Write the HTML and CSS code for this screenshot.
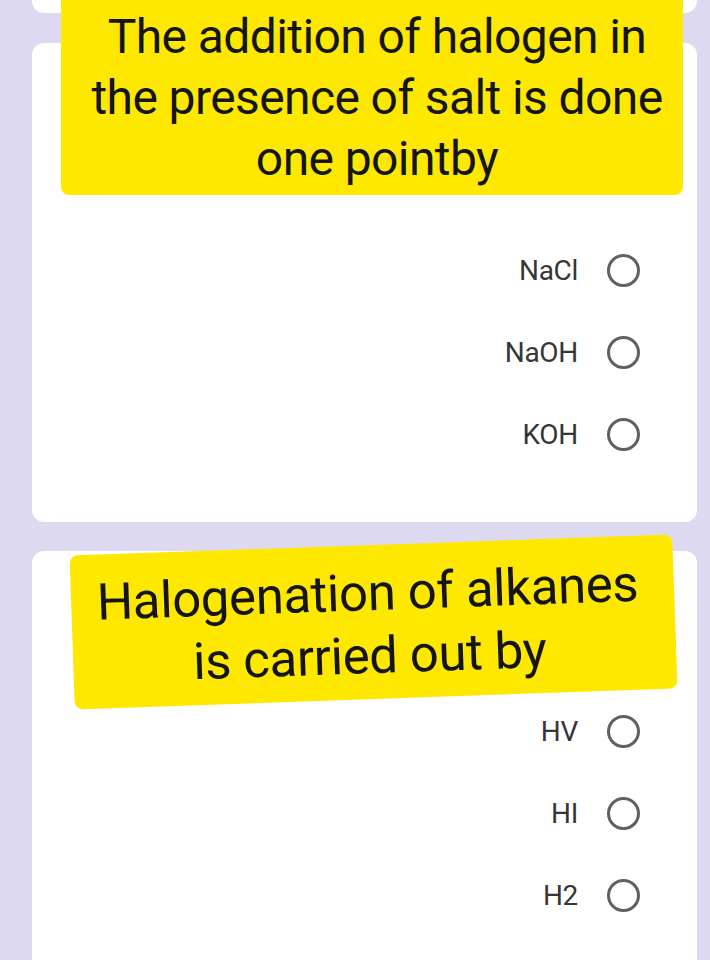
FILE: index.html
```html
<!DOCTYPE html>
<html>
<head>
<meta charset="utf-8">
<link rel="stylesheet" href="styles.css">
</head>
<body>
<div class="page">
  <div class="card card-prev"></div>

  <div class="card card-q1">
    <div class="sticker sticker-1">
      <p>The addition of halogen in<br>the presence of salt is done<br>one pointby</p>
    </div>
    <ul class="options options-1">
      <li class="option"><span class="label">NaCl</span><span class="radio"></span></li>
      <li class="option"><span class="label">NaOH</span><span class="radio"></span></li>
      <li class="option"><span class="label">KOH</span><span class="radio"></span></li>
    </ul>
  </div>

  <div class="card card-q2">
    <div class="sticker sticker-2">
      <p>Halogenation of alkanes<br>is carried out by</p>
    </div>
    <ul class="options options-2">
      <li class="option"><span class="label">HV</span><span class="radio"></span></li>
      <li class="option"><span class="label">HI</span><span class="radio"></span></li>
      <li class="option"><span class="label">H2</span><span class="radio"></span></li>
    </ul>
  </div>
</div>
</body>
</html>
```

FILE: styles.css
```css
* { box-sizing: border-box; }

html, body {
  margin: 0;
  padding: 0;
  background: #dcd9f1;
  overflow: hidden;
}

body {
  font-family: Roboto, "Noto Sans", "Liberation Sans", sans-serif;
  width: 710px;
  height: 960px;
}

.page {
  display: flex;
  flex-direction: column;
  gap: 30px;
  padding: 0 13px 0 32px;
}

.card {
  background: #ffffff;
  border-radius: 12px;
  position: relative;
}

.card-prev {
  height: 13px;
  border-radius: 0 0 12px 12px;
}

.card-q1 {
  height: 479px;
}

.card-q2 {
  margin-top: -1px;
  height: 440px;
}

.sticker {
  position: absolute;
  background: #fee800;
  display: flex;
  align-items: center;
  justify-content: center;
  text-align: center;
  color: #151515;
  z-index: 2;
}

.sticker p {
  margin: 0;
}

.sticker-1 {
  top: -43px;
  left: 29px;
  width: 622px;
  height: 195px;
  border-radius: 0 0 8px 8px;
  padding: 0 0 0 10px;
}

.sticker-1 p {
  font-size: 48px;
  line-height: 61px;
  letter-spacing: -0.6px;
}

.sticker-2 {
  top: -6px;
  left: 40px;
  width: 603px;
  height: 154px;
  border-radius: 8px;
  transform: rotate(-2deg);
  padding: 4px 10px 0 0;
}

.sticker-2 p {
  font-size: 51px;
  line-height: 63px;
  letter-spacing: -0.4px;
}

.options {
  list-style: none;
  margin: 0;
  padding: 0 57px 0 0;
  display: flex;
  flex-direction: column;
  align-items: flex-end;
}

.options-1 { padding-top: 186px; }
.options-2 { padding-top: 139px; }

.option {
  height: 82px;
  display: flex;
  align-items: center;
  gap: 29px;
}

.label {
  font-size: 28px;
  color: #363636;
  letter-spacing: -0.3px;
}

.radio {
  width: 33px;
  height: 33px;
  border: 3px solid #5f6064;
  border-radius: 50%;
}
```
